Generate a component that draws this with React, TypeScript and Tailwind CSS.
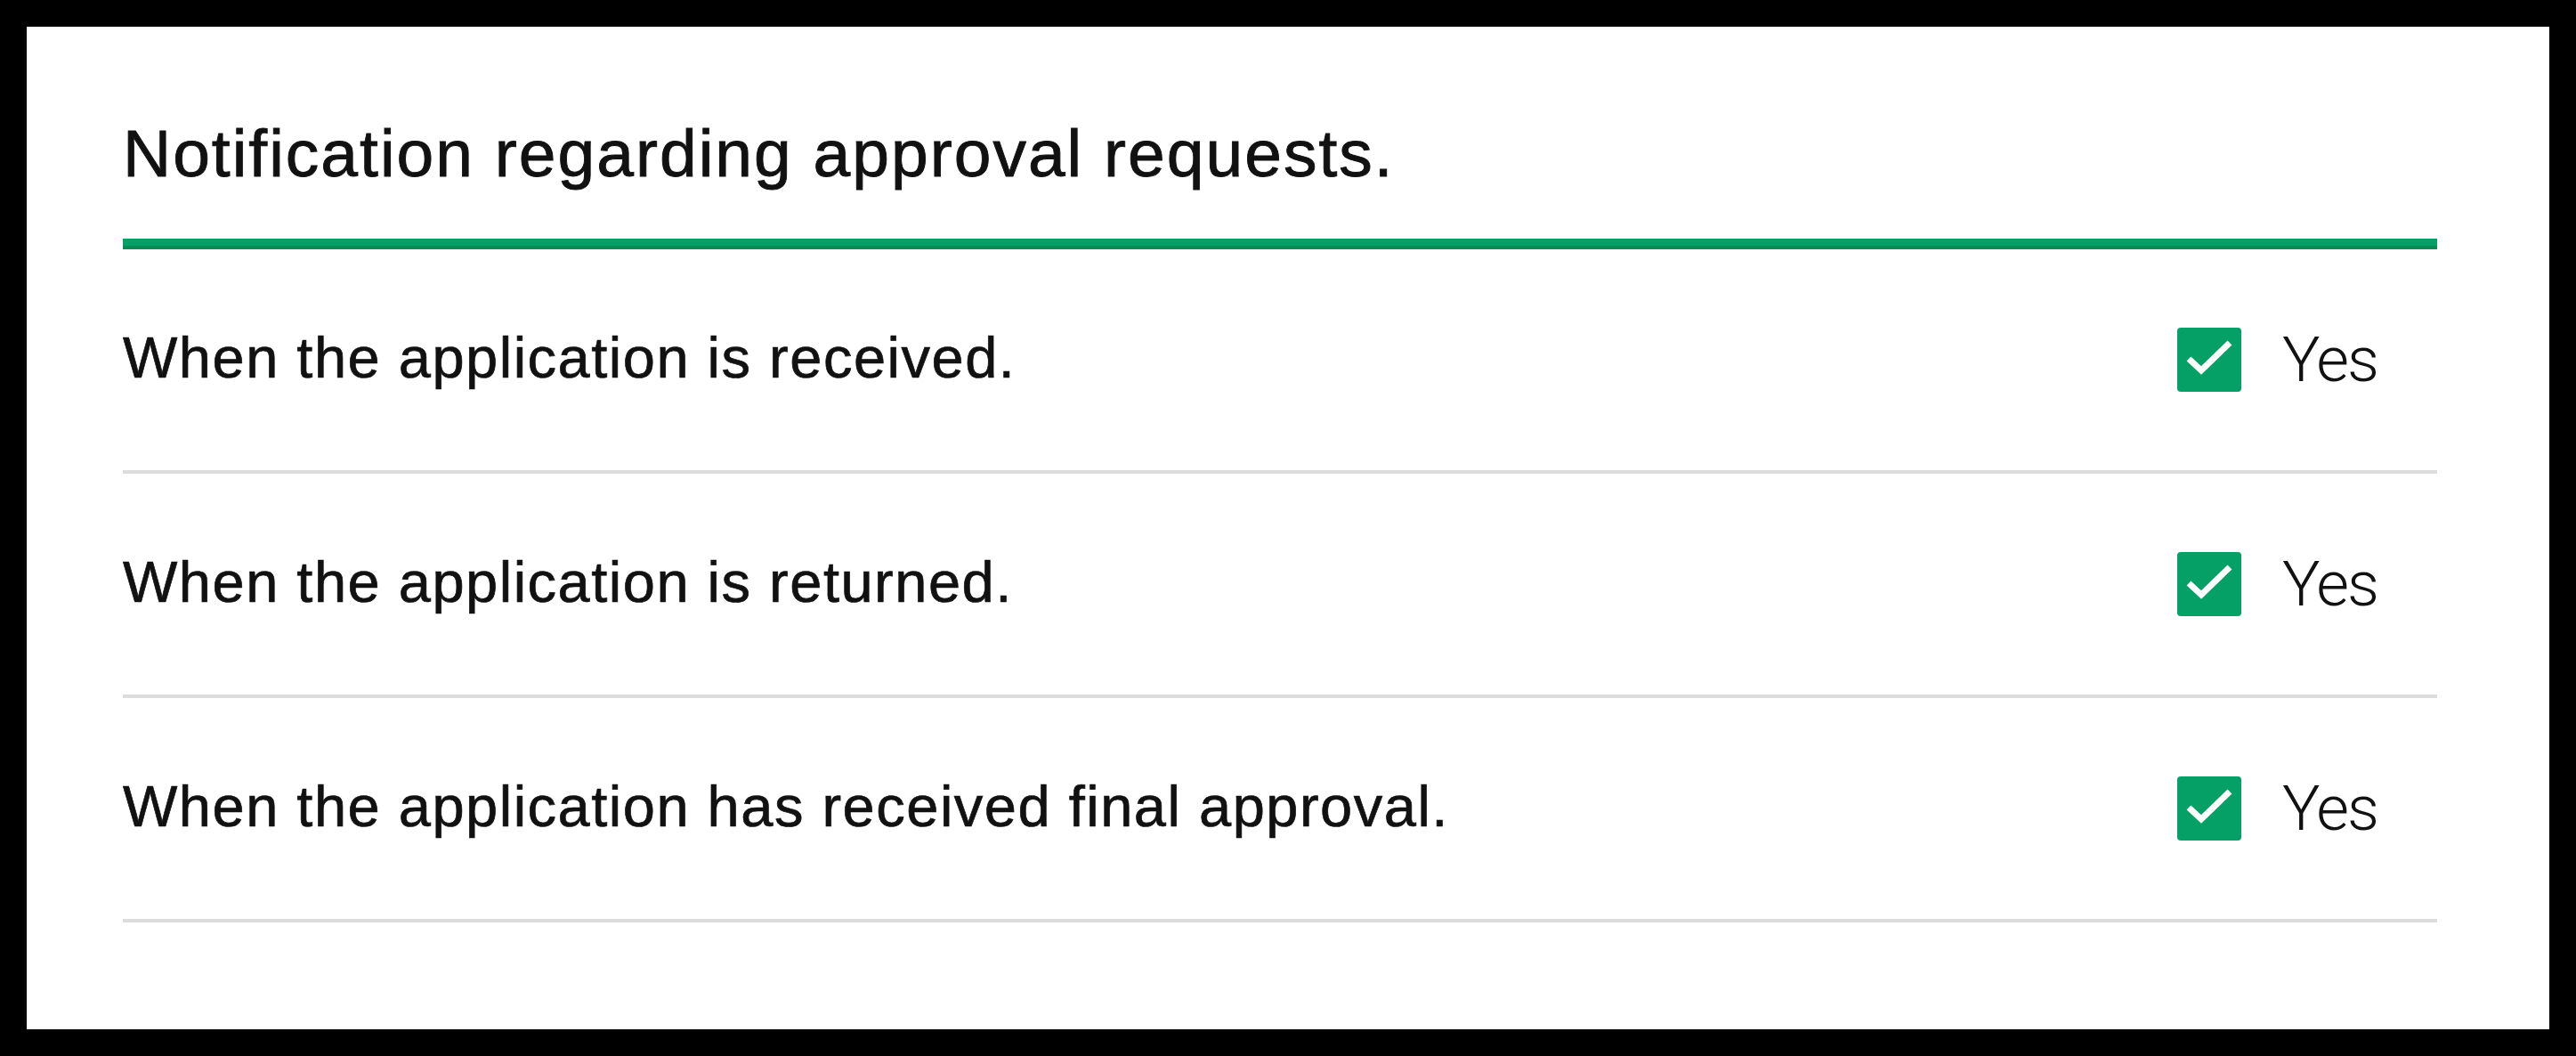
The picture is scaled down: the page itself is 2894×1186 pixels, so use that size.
import React from 'react';

const rows = [
  { id: 'received', label: 'When the application is received.' },
  { id: 'returned', label: 'When the application is returned.' },
  { id: 'final', label: 'When the application has received final approval.' },
];

function CheckBox() {
  return (
    <svg width="72" height="72" viewBox="0 0 72 72" className="shrink-0">
      <rect x="0" y="0" width="72" height="72" rx="4" fill="#05a066" />
      <polyline points="13,35 27,48 59,17" fill="none" stroke="#ffffff" strokeWidth="7" />
    </svg>
  );
}

export default function App() {
  return (
    <div className="w-full h-screen bg-black p-[30px]">
      <div className="h-full bg-white pt-[100px] pl-[108px] pr-[126px] pb-[120px] font-['Liberation_Sans',Arial,sans-serif] text-[#111]">
        <h2 className="text-[75px] leading-[84px] tracking-[2px] [-webkit-text-stroke:0.9px_#111] pb-[54px] border-b-[8px] border-[#04a066]">
          Notification regarding approval requests.
        </h2>
        <div className="h-[4px] bg-[#0b8b54]" />

        {rows.map((row) => (
          <div key={row.id} className="h-[252px] flex items-center justify-between border-b-4 border-[#dcdcdc]">
            <span className="text-[65px] tracking-[1.5px] [-webkit-text-stroke:0.7px_#111] -mt-[4px]">{row.label}</span>
            <label className="w-[292px] flex items-center gap-[46px]">
              <CheckBox />
              <span className="font-['Roboto',sans-serif] font-light text-[71px] tracking-[-2px] text-[#111]">Yes</span>
            </label>
          </div>
        ))}
      </div>
    </div>
  );
}
